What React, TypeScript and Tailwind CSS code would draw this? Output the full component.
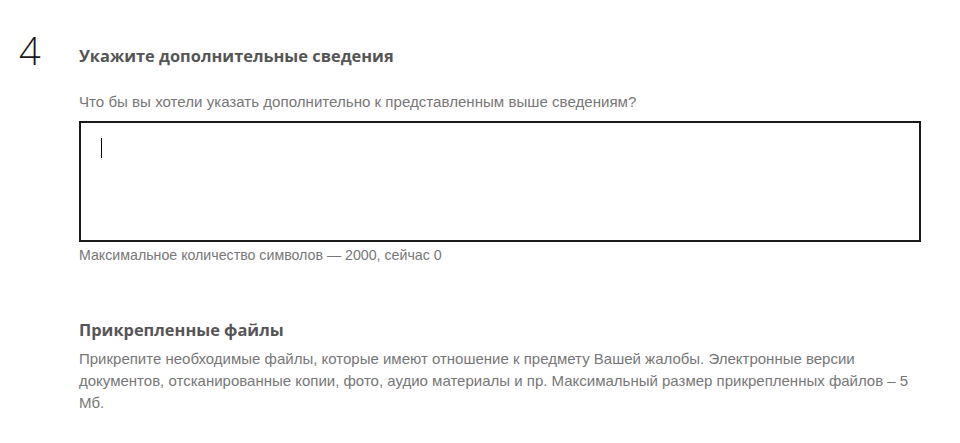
import React from "react";

export default function App() {
  return (
    <div className="w-[960px] h-[443px] bg-white overflow-hidden">
      <div className="flex pt-[26px]">
        <div className="w-[79px] pl-[19px] text-[38px] leading-[48px] font-light text-[#1a1a1a] font-['Open_Sans',sans-serif]">
          4
        </div>
        <div className="w-[842px]">
          <h2 className="mt-[18px] text-[16.4px] leading-[24px] font-bold text-[#555] font-['Open_Sans',sans-serif]">
            Укажите дополнительные сведения
          </h2>
          <p className="mt-[24px] text-[15.1px] leading-[20px] text-[#777] font-['Liberation_Sans',Arial,sans-serif]">
            Что бы вы хотели указать дополнительно к представленным выше сведениям?
          </p>
          <div className="mt-[9px] h-[121px] border-2 border-[#1a1a1a] pl-[20px] pt-[15px]">
            <div className="w-px h-[20px] bg-black" />
          </div>
          <p className="mt-[4px] text-[14.2px] leading-[18px] text-[#777] font-['Liberation_Sans',Arial,sans-serif]">
            Максимальное количество символов — 2000, сейчас 0
          </p>
          <h3 className="mt-[54px] text-[16.4px] leading-[24px] font-bold text-[#555] font-['Open_Sans',sans-serif]">
            Прикрепленные файлы
          </h3>
          <p className="mt-[6px] text-[15px] leading-[22px] text-[#777] font-['Liberation_Sans',Arial,sans-serif]">
            Прикрепите необходимые файлы, которые имеют отношение к предмету Вашей жалобы. Электронные версии
            документов, отсканированные копии, фото, аудио материалы и пр. Максимальный размер прикрепленных файлов – 5
            Мб.
          </p>
        </div>
      </div>
    </div>
  );
}
